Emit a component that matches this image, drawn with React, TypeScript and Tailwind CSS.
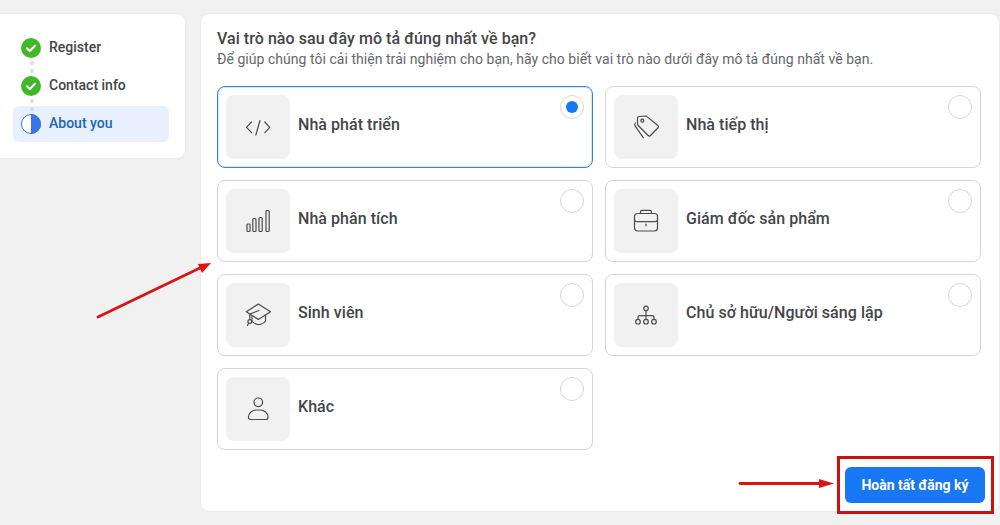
import React from "react";

const stroke = "#4b4c4f";

const CodeIcon = () => (
  <svg width="26" height="26" viewBox="0 0 26 26" fill="none" stroke={stroke} strokeWidth="1.2" strokeLinecap="round" strokeLinejoin="round">
    <path d="M6.500 8 1.500 13.300l5 5.300" />
    <path d="M15 6.500 10.800 21" />
    <path d="M19.800 8l5 5.300-5 5.300" />
  </svg>
);

const ChartIcon = () => (
  <svg width="26" height="26" viewBox="0 0 26 26" fill="none" stroke={stroke} strokeWidth="1.2">
    <rect x="2" y="16" width="3" height="7.500" rx="0.800" />
    <rect x="7.800" y="10.500" width="3.200" height="13" rx="1" />
    <rect x="14" y="9.500" width="3.200" height="14" rx="1" />
    <rect x="21" y="2.500" width="3.200" height="21" rx="1" />
  </svg>
);

const TagIcon = () => (
  <svg width="26" height="26" viewBox="0 0 26 26" fill="none" stroke={stroke} strokeWidth="1.2" strokeLinecap="round" strokeLinejoin="round">
    <path d="M6.200 2.500 12.500 2c.6 0 1.100.2 1.500.6L24.800 11.500c.8.700.8 1.800 0 2.500L17.500 21.500c-.7.700-1.700.7-2.400 0L5.200 11.500c-.4-.4-.7-1-.7-1.500V4.200c0-1 .7-1.700 1.700-1.700z" />
    <circle cx="9.300" cy="6.700" r="1.500" />
    <path d="M2.200 9c-.6 1-.6 2.500.3 3.700l7.800 11" />
  </svg>
);

const BriefcaseIcon = () => (
  <svg width="26" height="26" viewBox="0 0 26 26" fill="none" stroke={stroke} strokeWidth="1.2" strokeLinecap="round" strokeLinejoin="round">
    <rect x="1.500" y="5.500" width="23" height="17.500" rx="3" />
    <path d="M1.500 11.500c0 1.400 1 2.200 2.500 2.200h18c1.500 0 2.500-.8 2.500-2.200" />
    <path d="M7.500 5.500V4c0-1 .7-1.700 1.500-1.700h8c.8 0 1.500.7 1.500 1.700v1.500" />
    <path d="M13 16.200v1.500" />
  </svg>
);

const GradIcon = () => (
  <svg width="26" height="26" viewBox="0 0 26 26" fill="none" stroke={stroke} strokeWidth="1.200" strokeLinecap="round" strokeLinejoin="round">
    <path d="M13.300 2 25.500 9.700 13.300 17.500 1.300 9.700z" />
    <path d="M7 13.500v5.500c3 4.500 10 5 13.500 0v-6" />
    <path d="M14 8.500 4.800 12v5.500" />
    <circle cx="4.800" cy="19.500" r="1.900" />
    <path d="M3.600 21.200 2.500 23.500" />
  </svg>
);

const OrgIcon = () => (
  <svg width="26" height="26" viewBox="0 0 26 26" fill="none" stroke={stroke} strokeWidth="1.200" strokeLinecap="round">
    <circle cx="13" cy="6.400" r="2.200" />
    <circle cx="5" cy="19.700" r="2.300" />
    <circle cx="13" cy="19.700" r="2.300" />
    <circle cx="21" cy="19.700" r="2.300" />
    <path d="M13 8.600v8.800M5 17.400v-1.700c0-1.200.8-2 2-2h12c1.200 0 2 .8 2 2v1.700" />
  </svg>
);

const PersonIcon = () => (
  <svg width="26" height="26" viewBox="0 0 26 26" fill="none" stroke={stroke} strokeWidth="1.200">
    <circle cx="13.300" cy="6.300" r="4.300" />
    <path d="M3.500 21c0-4 4-7 8-7h3.500c4 0 8 3 8 7v.5c0 1.200-.8 2-2 2H5.500c-1.200 0-2-.8-2-2z" />
  </svg>
);

const roles = [
  { label: "Nhà phát triển", icon: <CodeIcon />, selected: true },
  { label: "Nhà tiếp thị", icon: <TagIcon /> },
  { label: "Nhà phân tích", icon: <ChartIcon /> },
  { label: "Giám đốc sản phẩm", icon: <BriefcaseIcon /> },
  { label: "Sinh viên", icon: <GradIcon /> },
  { label: "Chủ sở hữu/Người sáng lập", icon: <OrgIcon /> },
  { label: "Khác", icon: <PersonIcon /> },
];

const CheckStep = () => (
  <svg width="20" height="20" viewBox="0 0 20 20">
    <circle cx="10" cy="10" r="10" fill="#42b72a" />
    <path d="M6 10.300 8.800 13 14 7.800" fill="none" stroke="#fff" strokeWidth="2" strokeLinecap="round" strokeLinejoin="round" />
  </svg>
);

const HalfStep = () => (
  <svg width="20" height="20" viewBox="0 0 20 20">
    <circle cx="10" cy="10" r="9.500" fill="#fff" stroke="#3578e5" />
    <path d="M10 0a10 10 0 0 1 0 20z" fill="#3578e5" />
  </svg>
);

const Dots = () => (
  <div className="ml-[17px] flex h-[18px] flex-col justify-center gap-[4px]">
    <div className="size-[4px] rounded-full bg-[#dadde1]" />
    <div className="size-[4px] rounded-full bg-[#dadde1]" />
  </div>
);

const RoleCard = ({ label, icon, selected }: { label: string; icon: React.ReactNode; selected?: boolean }) => (
  <div
    className={
      "relative flex h-[82px] rounded-lg border bg-white p-2 " +
      (selected ? "border-[#3b7fd9] shadow-[inset_0_0_0_1px_#d6e6fb]" : "border-[#d6d6d6]")
    }
  >
    <div className="flex size-[64px] shrink-0 items-center justify-center rounded-lg bg-[#f1f1f1]">{icon}</div>
    <div className="mt-5 ml-2 text-base leading-5 font-medium tracking-[0.05px] text-[#444548]">{label}</div>
    <div className="absolute top-2 right-2 flex size-6 items-center justify-center rounded-full border border-[#d6d6d6] bg-white">
      {selected && <div className="size-3 rounded-full bg-[#1877f2]" />}
    </div>
  </div>
);

export default function App() {
  return (
    <div className="relative h-[525px] w-[1000px] overflow-hidden bg-[#f1f1f1] font-['Roboto',sans-serif]">
      <div className="flex items-start gap-4 pt-[14px]">
        <div className="w-[185px] rounded-r-lg bg-white pt-6 pr-4 pb-4 pl-[13px] shadow-[0_0_2px_rgba(0,0,0,0.1)]">
          <div className="flex h-[20px] items-center gap-2 pl-[8px] text-sm font-medium text-[#444548]">
            <CheckStep />
            <span className="mb-[2px]">Register</span>
          </div>
          <Dots />
          <div className="flex h-[20px] items-center gap-2 pl-[8px] text-sm font-medium text-[#444548]">
            <CheckStep />
            <span className="mb-[2px]">Contact info</span>
          </div>
          <Dots />
          <div className="-mt-2 flex h-9 items-center gap-2 rounded-md bg-[#e7f0fc] pl-[8px] text-sm font-medium text-[#2264bd]">
            <HalfStep />
            <span className="mb-[2px]">About you</span>
          </div>
        </div>

        <div className="h-[497px] w-[798px] rounded-lg bg-white pt-4 pr-[18px] pl-4 shadow-[0_0_2px_rgba(0,0,0,0.1)]">
          <h1 className="text-base leading-[18px] font-medium tracking-[0.05px] text-[#444548]">Vai trò nào sau đây mô tả đúng nhất về bạn?</h1>
          <p className="mt-[2px] text-sm leading-[18px] tracking-[0.04px] text-[#65676b]">
            Để giúp chúng tôi cải thiện trải nghiệm cho bạn, hãy cho biết vai trò nào dưới đây mô tả đúng nhất về bạn.
          </p>
          <div className="mt-[18px] grid grid-cols-2 gap-x-3 gap-y-3">
            {roles.map((r) => (
              <RoleCard key={r.label} label={r.label} icon={r.icon} selected={r.selected} />
            ))}
          </div>
          <div className="mt-[17px] flex justify-end">
            <button className="-mr-1 h-9 w-[140px] rounded-md bg-[#1877f2] text-sm font-bold text-white">Hoàn tất đăng ký</button>
          </div>
        </div>
      </div>

      {/* annotations drawn over the screenshot */}
      <div className="absolute top-[456px] left-[837px] h-[58px] w-[157px] border-[3px] border-[#d00f0f]" />
      <svg className="absolute top-0 left-0" width="1000" height="525" fill="none">
        <path d="M98 317 L202 267" stroke="#d81515" strokeWidth="2.800" strokeLinecap="round" />
        <path d="M211 263 L198 264 L202 273z" fill="#e80f0f" />
        <path d="M740 483.500 H822" stroke="#d81515" strokeWidth="2.800" strokeLinecap="round" />
        <path d="M834 483.500 L819 479 V488z" fill="#d81515" />
      </svg>
    </div>
  );
}
